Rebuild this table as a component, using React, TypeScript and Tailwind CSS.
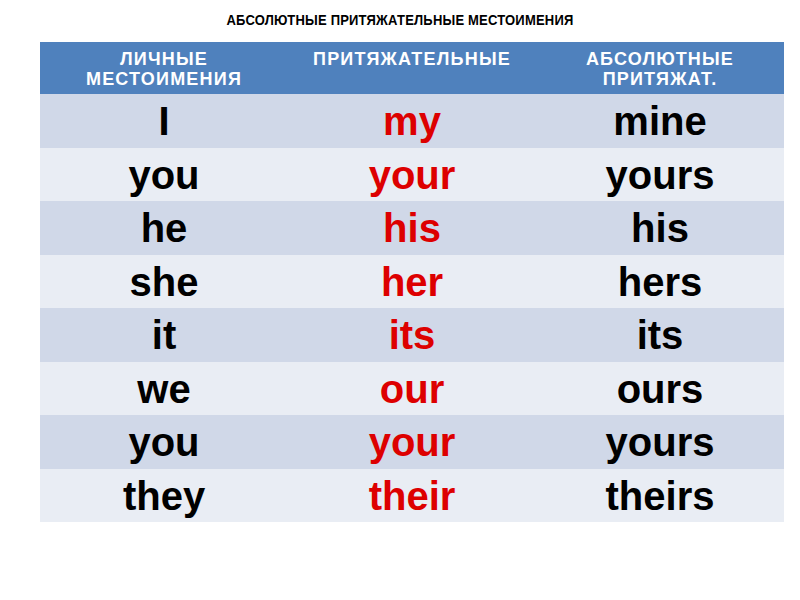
import React from "react";

const rows: [string, string, string][] = [
  ["I", "my", "mine"],
  ["you", "your", "yours"],
  ["he", "his", "his"],
  ["she", "her", "hers"],
  ["it", "its", "its"],
  ["we", "our", "ours"],
  ["you", "your", "yours"],
  ["they", "their", "theirs"],
];

export default function App() {
  return (
    <div
      className="w-[800px] h-[600px] bg-white flex flex-col"
      style={{ fontFamily: '"Liberation Sans", Arial, sans-serif' }}
    >
      <div className="h-[42px] flex items-start justify-center pt-[13px]">
        <div className="text-[13px] leading-[14px] font-bold text-black tracking-[0.2px] scale-y-[1.15]">
          АБСОЛЮТНЫЕ ПРИТЯЖАТЕЛЬНЫЕ МЕСТОИМЕНИЯ
        </div>
      </div>
      <div className="ml-[40px] w-[744px] flex flex-col">
        <div className="h-[52px] bg-[#4f81bd] grid grid-cols-3 text-white font-bold text-[18px] leading-[20px] tracking-[1.2px] text-center pt-[7px]">
          <div>
            ЛИЧНЫЕ
            <br />
            МЕСТОИМЕНИЯ
          </div>
          <div>ПРИТЯЖАТЕЛЬНЫЕ</div>
          <div>
            АБСОЛЮТНЫЕ
            <br />
            ПРИТЯЖАТ.
          </div>
        </div>
        {rows.map((r, i) => (
          <div
            key={i}
            className={
              "h-[53.5px] grid grid-cols-3 items-center text-center font-bold text-[40px] leading-none pt-[1px] " +
              (i % 2 === 0 ? "bg-[#d0d8e8]" : "bg-[#e9edf4]")
            }
          >
            <div className="text-black">{r[0]}</div>
            <div className="text-[#dd0000]">{r[1]}</div>
            <div className="text-black">{r[2]}</div>
          </div>
        ))}
      </div>
    </div>
  );
}
